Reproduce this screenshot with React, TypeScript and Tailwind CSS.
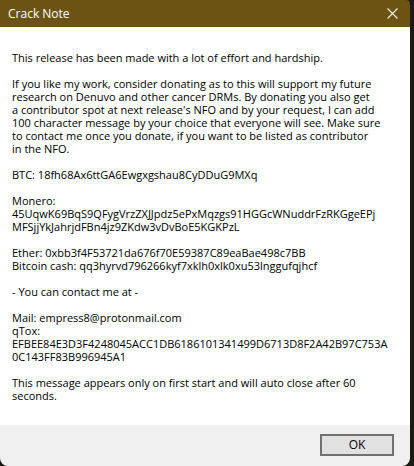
import React from "react";

const lines: string[] = [
  "This release has been made with a lot of effort and hardship.",
  "",
  "If you like my work, consider donating as to this will support my future",
  "research on Denuvo and other cancer DRMs. By donating you also get",
  "a contributor spot at next release's NFO and by your request, I can add",
  "100 character message by your choice that everyone will see. Make sure",
  "to contact me once you donate, if you want to be listed as contributor",
  "in the NFO.",
  "",
  "BTC: 18fh68Ax6ttGA6Ewgxgshau8CyDDuG9MXq",
  "",
  "Monero:",
  "45UqwK69BqS9QFygVrzZXJJpdz5ePxMqzgs91HGGcWNuddrFzRKGgeEPj",
  "MFSjjYkJahrjdFBn4jz9ZKdw3vDvBoE5KGKPzL",
  "",
  "Ether: 0xbb3f4F53721da676f70E59387C89eaBae498c7BB",
  "Bitcoin cash: qq3hyrvd796266kyf7xklh0xlk0xu53lnggufqjhcf",
  "",
  "- You can contact me at -",
  "",
  "Mail: empress8@protonmail.com",
  "qTox:",
  "EFBEE84E3D3F4248045ACC1DB6186101341499D6713D8F2A42B97C753A",
  "0C143FF83B996945A1",
  "",
  "This message appears only on first start and will auto close after 60",
  "seconds.",
];

export default function App() {
  return (
    <div className="w-[414px] h-[466px] bg-[#1b1a13] overflow-hidden">
      <div
        className="w-[410px] h-[466px] flex flex-col rounded-b-[8px] rounded-tr-[4px] overflow-hidden"
        style={{ fontFamily: '"Open Sans", "Noto Sans", sans-serif' }}
      >
        <div className="h-[27px] bg-[#6b5314] flex items-center justify-between pl-[8px] pr-[10px] shrink-0">
          <span className="text-white text-[12px] leading-none">Crack Note</span>
          <svg width="11" height="11" viewBox="0 0 11 11" className="mr-[2px]">
            <path d="M0.5 0.5 L10.5 10.5 M10.5 0.5 L0.5 10.5" stroke="#f4f0e0" strokeWidth="1.1" />
          </svg>
        </div>
        <div className="bg-white h-[398px] shrink-0 pt-[24px] pl-[12px] text-[11px] leading-[13px] text-black">
          {lines.map((l, i) => (
            <div key={i} className="h-[13px] whitespace-nowrap">
              {l}
            </div>
          ))}
        </div>
        <div className="bg-[#f0f0f0] flex-1 flex justify-end items-start pt-[9px] pr-[16px]">
          <button className="w-[74px] h-[22px] bg-[#e1e1e1] border-2 border-[#707070] text-[12px] text-black leading-none flex items-center justify-center">
            OK
          </button>
        </div>
      </div>
    </div>
  );
}
